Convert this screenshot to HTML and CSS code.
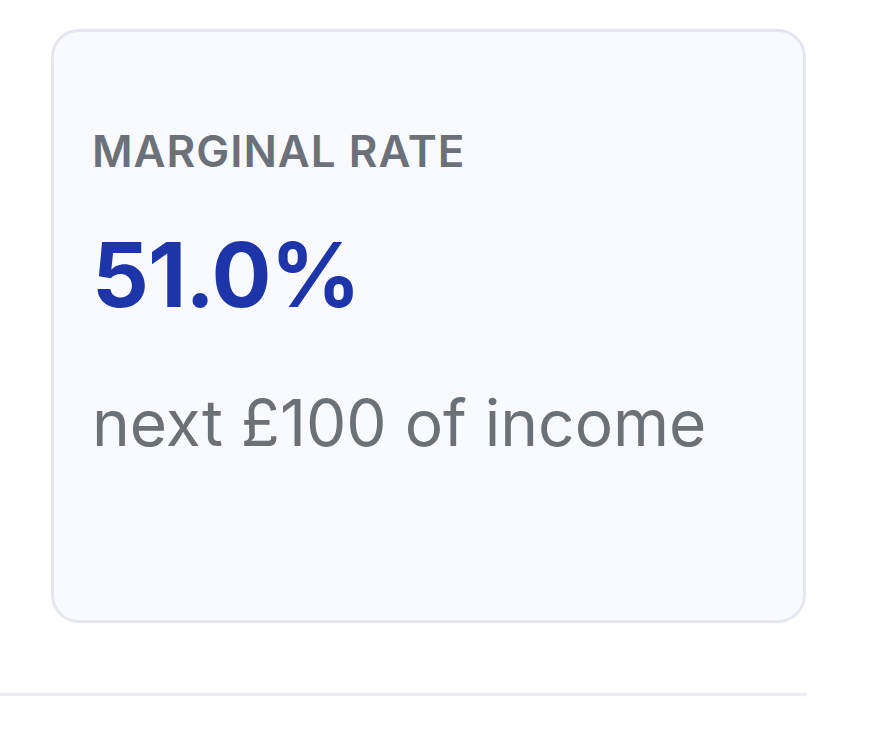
FILE: index.html
```html
<!DOCTYPE html>
<html>
<head>
<meta charset="utf-8">
<link rel="stylesheet" href="styles.css">
</head>
<body>
<main class="page">
  <section class="card">
    <div class="label">MARGINAL RATE</div>
    <div class="value">51.0%</div>
    <div class="sub">next £100 of income</div>
  </section>
  <hr class="divider">
</main>
</body>
</html>
```
FILE: styles.css
```css
html, body {
  margin: 0;
  padding: 0;
  background: #ffffff;
}
.page {
  width: 806px;
  padding-top: 29px;
  font-family: Inter, "Noto Sans", sans-serif;
}
.card {
  box-sizing: border-box;
  margin-left: 51px;
  width: 755px;
  height: 594px;
  border: 3px solid #e5e6f2;
  border-radius: 28px;
  background: #f9faff;
  padding: 92px 0 0 38px;
  display: flex;
  flex-direction: column;
}
.label {
  font-size: 44px;
  line-height: 54px;
  font-weight: 600;
  color: #6b7079;
  letter-spacing: 1px;
}
.value {
  margin-top: 47px;
  font-size: 89px;
  line-height: 100px;
  font-weight: 700;
  color: #1d35a8;
  letter-spacing: -1px;
}
.sub {
  margin-top: 58px;
  font-size: 64px;
  line-height: 80px;
  font-weight: 400;
  color: #6b7079;
}
.divider {
  margin: 70px 0 0 0;
  border: 0;
  height: 3px;
  background: #ececf4;
  width: 806px;
}
```
